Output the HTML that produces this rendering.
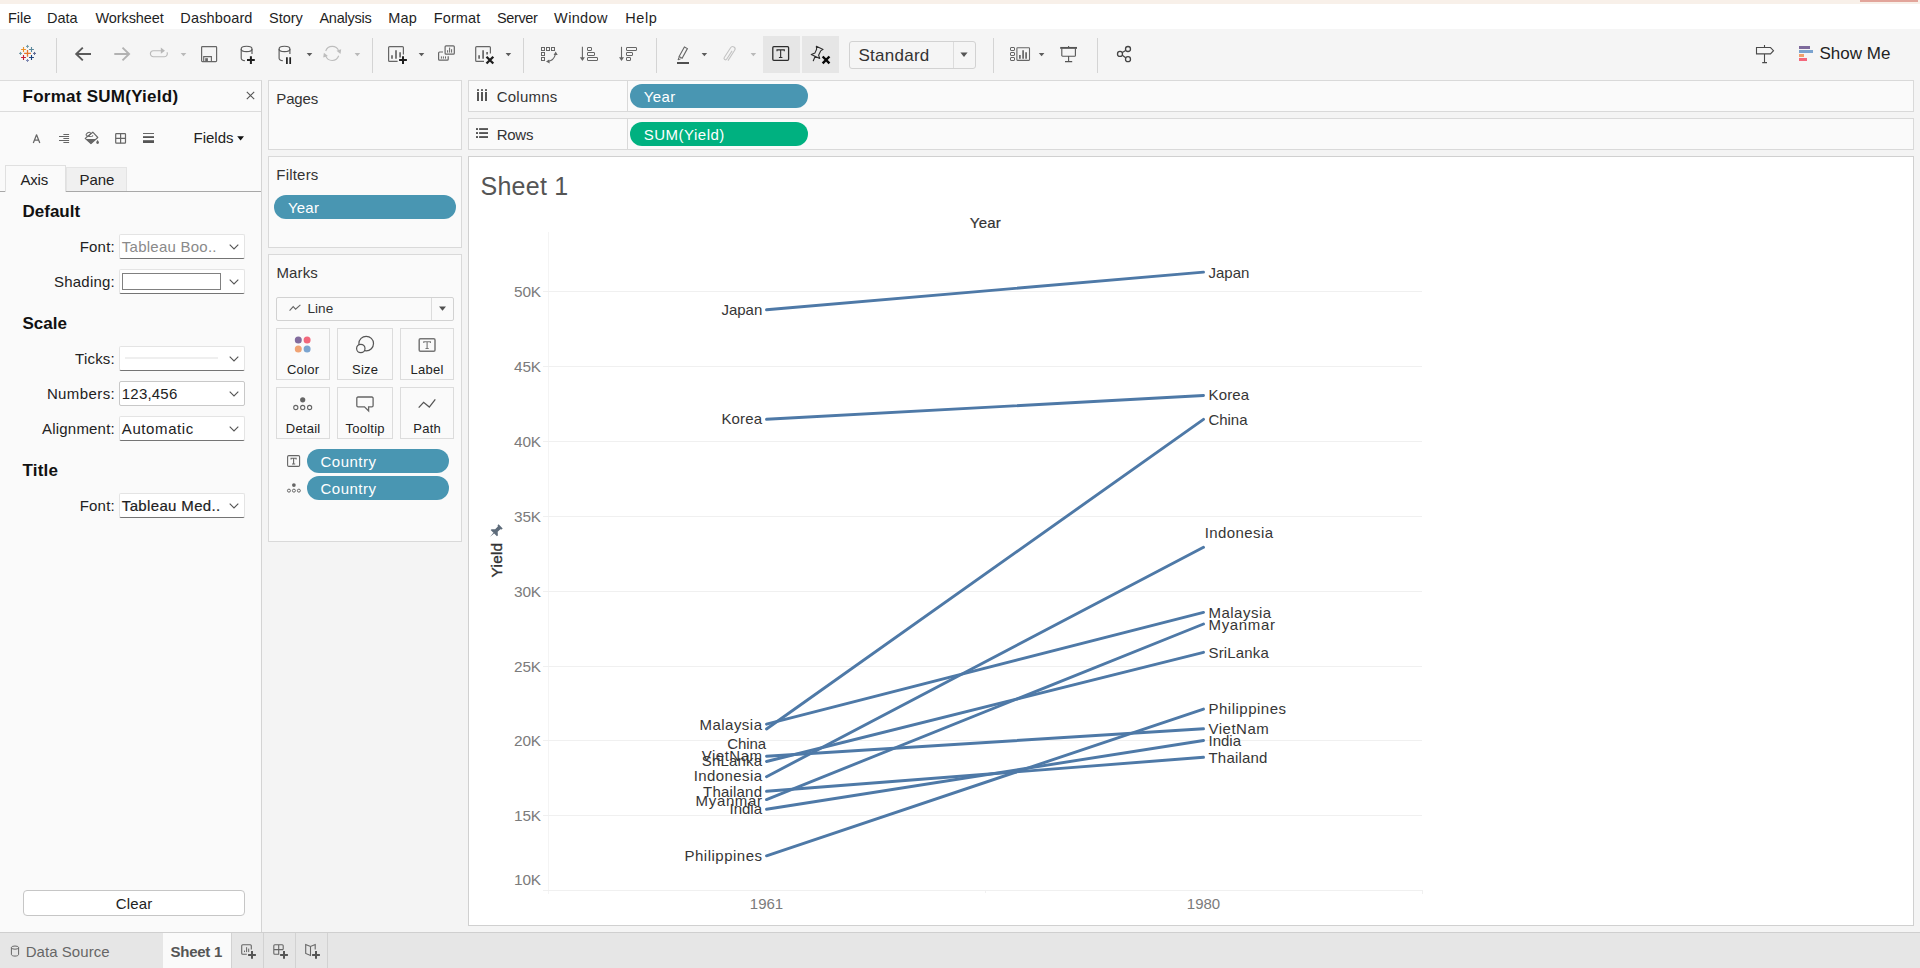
<!DOCTYPE html>
<html lang="en"><head><meta charset="utf-8"><title>Tableau - Sheet 1</title>
<style>
html,body{margin:0;padding:0}
body{width:1920px;height:968px;position:relative;overflow:hidden;background:#f4f4f4;font-family:"Liberation Sans", sans-serif;}
div,span.t,svg{position:absolute;box-sizing:border-box}
span.t{white-space:nowrap;display:block}
.card{background:#fafafa;border:1px solid #d9d9d9}
.dd{background:#fff;border:1px solid #e4e4e4;border-bottom:1px solid #747474;border-radius:2px}
.dd.pl{border:1px solid #c8c8c8}
.pill{border-radius:12px;height:24px}
.mb{background:#fafafa;border:1px solid #dcdcdc}
.sep{width:1px;background:#d4d4d4;top:38px;height:35px}
</style></head><body>
<div style="left:0px;top:0px;width:1920px;height:4px;background:#f8f0e9"></div>
<div style="left:1860px;top:0px;width:58px;height:2px;background:#e2a59b"></div>
<div style="left:0px;top:4px;width:1920px;height:25px;background:#fff"></div>
<div style="left:0px;top:29px;width:1920px;height:51px;background:#f5f5f5"></div>
<span class="t" style="top:10.73px;font-size:14.5px;line-height:14.5px;color:#1f1f1f;left:8px;">File</span>
<span class="t" style="top:10.73px;font-size:14.5px;line-height:14.5px;color:#1f1f1f;left:47px;">Data</span>
<span class="t" style="top:10.73px;font-size:14.5px;line-height:14.5px;color:#1f1f1f;letter-spacing:-0.1px;left:95.5px;">Worksheet</span>
<span class="t" style="top:10.73px;font-size:14.5px;line-height:14.5px;color:#1f1f1f;letter-spacing:0.15px;left:180.3px;">Dashboard</span>
<span class="t" style="top:10.73px;font-size:14.5px;line-height:14.5px;color:#1f1f1f;left:269px;">Story</span>
<span class="t" style="top:10.73px;font-size:14.5px;line-height:14.5px;color:#1f1f1f;letter-spacing:-0.25px;left:319.4px;">Analysis</span>
<span class="t" style="top:10.73px;font-size:14.5px;line-height:14.5px;color:#1f1f1f;letter-spacing:0.15px;left:388.3px;">Map</span>
<span class="t" style="top:10.73px;font-size:14.5px;line-height:14.5px;color:#1f1f1f;letter-spacing:0.1px;left:433.8px;">Format</span>
<span class="t" style="top:10.73px;font-size:14.5px;line-height:14.5px;color:#1f1f1f;letter-spacing:-0.35px;left:496.9px;">Server</span>
<span class="t" style="top:10.73px;font-size:14.5px;line-height:14.5px;color:#1f1f1f;letter-spacing:0.35px;left:554.1px;">Window</span>
<span class="t" style="top:10.73px;font-size:14.5px;line-height:14.5px;color:#1f1f1f;letter-spacing:0.6px;left:625.2px;">Help</span>
<div class="sep" style="left:56px"></div>
<div class="sep" style="left:372px"></div>
<div class="sep" style="left:523px"></div>
<div class="sep" style="left:656px"></div>
<div class="sep" style="left:993px"></div>
<div class="sep" style="left:1097px"></div>
<div style="left:763px;top:36px;width:37px;height:37px;background:#e6e6e6"></div>
<div style="left:802px;top:36px;width:37px;height:37px;background:#e6e6e6"></div>
<svg style="left:0px;top:29px" width="1920" height="51" viewBox="0 29 1920 51" fill="none"><path d="M24.1 53.4h6.8M27.5 50.0v6.8" stroke="#e8762c" stroke-width="1.3"/><path d="M21.1 49.5h4.8M23.5 47.1v4.8" stroke="#eb9129" stroke-width="1.1"/><path d="M29.1 49.5h4.8M31.5 47.1v4.8" stroke="#59879b" stroke-width="1.1"/><path d="M21.1 57.5h4.8M23.5 55.1v4.8" stroke="#c72035" stroke-width="1.1"/><path d="M29.1 57.5h4.8M31.5 55.1v4.8" stroke="#1f447e" stroke-width="1.1"/><path d="M26.0 46.4h3.0M27.5 44.9v3.0" stroke="#7099a6" stroke-width="1.0"/><path d="M19.0 53.4h3.0M20.5 51.9v3.0" stroke="#7099a6" stroke-width="1.0"/><path d="M33.0 53.4h3.0M34.5 51.9v3.0" stroke="#5b6591" stroke-width="1.0"/><path d="M26.0 60.5h3.0M27.5 59.0v3.0" stroke="#8089b3" stroke-width="1.0"/><path d="M91 54H76M82.8 47.6L76.2 54L82.8 60.4" stroke="#5a5a5a" stroke-width="1.9"/><path d="M114.3 54H129.3M122.5 47.6L129.1 54L122.5 60.4" stroke="#b2b2b2" stroke-width="1.9"/><path d="M161.5 50.7H153.4a3 3 0 0 0 0 6H164.4a3 3 0 0 0 2.6-4.4" stroke="#bababa" stroke-width="1.15"/><path d="M160.8 47.6l4.2 3.1l-4.2 3.1z" fill="#b8b8b8"/><path d="M180.7 53h5.6l-2.8 3.3z" fill="#b9b9b9"/><rect x="201.6" y="46.6" width="15" height="15" rx="0.8" stroke="#666" stroke-width="1.2"/><path d="M203.7 61V56.6H211.4V61" stroke="#666" stroke-width="1.1"/><rect x="205.2" y="58.2" width="2.7" height="3" fill="#666"/><ellipse cx="246.6" cy="48.9" rx="5.4" ry="2.7" stroke="#5a5a5a" stroke-width="1.15"/><path d="M241.2 48.9V58.2c0 1.2 1.5 2.2 3.8 2.6M252.0 48.9V54" stroke="#5a5a5a" stroke-width="1.15"/><path d="M247.0 60.1h7.8M250.9 56.2v7.8" stroke="#1f1f1f" stroke-width="2"/><ellipse cx="284.5" cy="48.9" rx="5.4" ry="2.7" stroke="#5a5a5a" stroke-width="1.15"/><path d="M279.1 48.9V58.2c0 1.2 1.5 2.2 3.8 2.6M289.90000000000003 48.9V54" stroke="#5a5a5a" stroke-width="1.15"/><path d="M286.9 57.2v6.7M290.2 57.2v6.7" stroke="#1f1f1f" stroke-width="1.7"/><path d="M306.7 53h5.6l-2.8 3.3z" fill="#5c5c5c"/><path d="M325.7 51.0A6.9 6.9 0 0 1 338.7 50.9M338.7 55.8A6.9 6.9 0 0 1 325.7 55.9" stroke="#bdbdbd" stroke-width="1.1"/><path d="M336.5 50.8L341.2 49.3L340.5 54z" fill="#bdbdbd"/><path d="M327.9 56.0L323.2 57.5L323.9 52.8z" fill="#bdbdbd"/><path d="M354.59999999999997 53h5.6l-2.8 3.3z" fill="#b9b9b9"/><path d="M403.4 54.6V47.6a1 1 0 0 0 -1-1H389.6a1 1 0 0 0 -1 1V60.4a1 1 0 0 0 1 1H397.6" stroke="#666" stroke-width="1.2"/><path d="M392 55.3v3.4M396 50.2v8.5M400.1 52.2v5.4" stroke="#666" stroke-width="1.7"/><path d="M399.1 60.1h7.8M403 56.2v7.8" stroke="#1f1f1f" stroke-width="2"/><path d="M418.7 53h5.6l-2.8 3.3z" fill="#5c5c5c"/><path d="M443 52H439.6a1 1 0 0 0 -1 1V59.2a1 1 0 0 0 1 1H447.2a1 1 0 0 0 1-1V56.2" stroke="#666" stroke-width="1.2"/><rect x="445.1" y="45.8" width="9.2" height="8.4" rx="1" stroke="#666" stroke-width="1.2"/><path d="M447.6 50.2v2.4M449.6 47.6v5M451.6 49.2v3.4M441.4 56.4v2.2M443.4 56.4v2.2M445.5 56.4v2.2" stroke="#666" stroke-width="1"/><path d="M490.4 53.6V47.6a1 1 0 0 0 -1-1H476.7a1 1 0 0 0 -1 1V60.4a1 1 0 0 0 1 1H484" stroke="#666" stroke-width="1.2"/><path d="M479.1 55.3v3.4M483.1 50.2v8.5M487.1 52v2.6" stroke="#666" stroke-width="1.7"/><path d="M486.5 56.7l6.8 6.8M493.29999999999995 56.7l-6.8 6.8" stroke="#1f1f1f" stroke-width="2.3"/><path d="M505.59999999999997 53h5.6l-2.8 3.3z" fill="#5c5c5c"/><rect x="541.5" y="47.5" width="3" height="3" stroke="#666" stroke-width="1" shape-rendering="crispEdges"/><rect x="546.5" y="47.5" width="3" height="3" stroke="#666" stroke-width="1" shape-rendering="crispEdges"/><rect x="551.5" y="47.5" width="3" height="3" stroke="#666" stroke-width="1" shape-rendering="crispEdges"/><rect x="541.5" y="52.5" width="3" height="3" stroke="#666" stroke-width="1" shape-rendering="crispEdges"/><rect x="541.5" y="57.5" width="3" height="3" stroke="#666" stroke-width="1" shape-rendering="crispEdges"/><path d="M548.4 61.2c3.6-0.6 6-3 6.9-6.6" stroke="#666" stroke-width="1.1"/><path d="M555.7 51.6l2 3.5h-4.1z M546 61.6l3.2-2.2l0.5 4z" fill="#666"/><path d="M582.4 46.8V58" stroke="#666" stroke-width="1.1"/><path d="M579.9 57.2h5l-2.5 3.9z" fill="#666"/><rect x="587.5" y="47.5" width="4" height="3" rx="0.3" stroke="#666" stroke-width="1"/><rect x="587.5" y="52.5" width="7" height="3" rx="0.3" stroke="#666" stroke-width="1"/><rect x="587.5" y="57.5" width="10" height="3" rx="0.3" stroke="#666" stroke-width="1"/><path d="M621.5 46.8V58" stroke="#666" stroke-width="1.1"/><path d="M619.0 57.2h5l-2.5 3.9z" fill="#666"/><rect x="626.5" y="47.5" width="10" height="3" rx="0.3" stroke="#666" stroke-width="1"/><rect x="626.5" y="52.5" width="6" height="3" rx="0.3" stroke="#666" stroke-width="1"/><rect x="626.5" y="57.5" width="4" height="3" rx="0.3" stroke="#666" stroke-width="1"/><path d="M684.4 46.9l3 1.7l-5.3 9.6l-3-1.7z" stroke="#666" stroke-width="1.1"/><path d="M679.2 57l-1.2 2.8l2.6-0.9" stroke="#666" stroke-width="1"/><path d="M677 63H689" stroke="#4f4f4f" stroke-width="2"/><path d="M701.6 53h5.6l-2.8 3.3z" fill="#5c5c5c"/><path transform="translate(728.9 53.9) rotate(33) scale(0.93)" d="M1.1 -4.6V5.9A1.6 1.6 0 0 1 -2.1 5.9V-6.6A2.6 2.6 0 0 1 3.1 -6.6V6.6" stroke="#c3c3c3" stroke-width="1.15"/><path d="M750.6 53h5.6l-2.8 3.3z" fill="#b9b9b9"/><rect x="772.8" y="46.7" width="15.8" height="13.6" rx="1" stroke="#2d2d2d" stroke-width="1.3"/><path d="M777 51.2V49.9h7.3v1.3M780.65 49.9v7.4M778.9 57.5h3.5" stroke="#2d2d2d" stroke-width="1.1"/><path d="M816.35 46.3L823.1 49.4L820.65 50.9L818.6 55.2L819.7 58.5L811.25 54.5L815 52.9L816.6 49.3zM815.1 56.5L813.3 60.8" stroke="#2c2c2c" stroke-width="1.1" stroke-linejoin="round" stroke-linecap="round"/><path d="M822.65 56.5l6.8 6.8M829.4499999999999 56.5l-6.8 6.8" stroke="#080808" stroke-width="2.4"/><rect x="1010.5" y="47.5" width="4" height="3" rx="0.5" stroke="#666" stroke-width="1"/><rect x="1010.5" y="52.5" width="4" height="3" rx="0.5" stroke="#666" stroke-width="1"/><rect x="1010.5" y="57.5" width="4" height="3" rx="0.5" stroke="#666" stroke-width="1"/><rect x="1016.9" y="47.8" width="12.6" height="12.6" rx="0.6" stroke="#666" stroke-width="1.1"/><path d="M1019.9 55.1v3.7M1023.1 50.2v8.6M1026.1 52.2v6.6" stroke="#666" stroke-width="1.7"/><path d="M1038.8 53h5.6l-2.8 3.3z" fill="#5c5c5c"/><path d="M1060.2 47.9H1077" stroke="#555" stroke-width="1.9"/><path d="M1068.6 46v1.4M1061.8 48.6V55.4a0.8 0.8 0 0 0 0.8 0.8H1074.6a0.8 0.8 0 0 0 0.8-0.8V48.6M1068.6 56.4V61.4M1065 61.6h7.2" stroke="#555" stroke-width="1.1"/><path d="M1122.3 52.6l3.4-2.2M1122.3 55.3l3.4 2.4" stroke="#444" stroke-width="1.2"/><circle cx="1128" cy="49" r="2.5" stroke="#444" stroke-width="1.3"/><circle cx="1120" cy="53.9" r="2.5" stroke="#444" stroke-width="1.3"/><circle cx="1128" cy="59.2" r="2.5" stroke="#444" stroke-width="1.3"/><path d="M1764.5 45V47.4M1764.5 54V62.4M1762.2 62.6h4.8M1756.5 47.5H1770.5l3 3.2l-3 3.2H1756.5z" stroke="#4a4a4a" stroke-width="1.1"/></svg>
<div style="left:849px;top:41px;width:127px;height:28px;border:1px solid #d2d2d2;border-radius:3px;background:#f5f5f5"></div>
<div style="left:953px;top:42px;width:1px;height:26px;background:#dcdcdc"></div>
<span class="t" style="top:46.61px;font-size:17px;line-height:17px;color:#333;letter-spacing:0.25px;left:858.5px;">Standard</span>
<svg style="left:959px;top:52px;" width="10" height="6" viewBox="0 0 10 6" fill="none"><path d="M1.4 0.6h7.2l-3.6 4.4z" fill="#555"/></svg>
<div style="left:1799px;top:46px;width:11px;height:3px;background:#7e6a9c"></div>
<div style="left:1799px;top:50px;width:14px;height:3px;background:#7aa3cf"></div>
<div style="left:1799px;top:54px;width:5px;height:3px;background:#f0a06c"></div>
<div style="left:1799px;top:58px;width:8px;height:3px;background:#f4687c"></div>
<span class="t" style="top:45.41px;font-size:17px;line-height:17px;color:#222;left:1819.5px;">Show Me</span>
<div style="left:0px;top:80px;width:262px;height:853px;background:#fafafa;border-right:1px solid #d4d4d4;border-top:1px solid #dcdcdc"></div>
<div style="left:0px;top:111px;width:261px;height:1px;background:#dcdcdc"></div>
<span class="t" style="top:87.61px;font-size:17px;line-height:17px;color:#111;font-weight:bold;letter-spacing:0.26px;left:22.5px;">Format SUM(Yield)</span>
<svg style="left:246px;top:91px;" width="9" height="9" viewBox="0 0 9 9" fill="none"><path d="M0.8 0.8l7.4 7.4M8.2 0.8l-7.4 7.4" stroke="#555" stroke-width="1.1"/></svg>
<span class="t" style="top:130.30px;font-size:15px;line-height:15px;color:#222;left:193.5px;">Fields</span>
<svg style="left:237px;top:136px;" width="8" height="5" viewBox="0 0 8 5" fill="none"><path d="M0.2 0.2h6.8l-3.4 4.2z" fill="#111"/></svg>
<svg style="left:24px;top:128px" width="140" height="20" viewBox="24 128 140 20" fill="none"><path d="M33.3 143l3.25-8.2l3.25 8.2M34.4 140.2h4.4" stroke="#666" stroke-width="1.25" stroke-linejoin="round"/><path d="M63.4 134.5H69.1" stroke="#666" stroke-width="1"/><path d="M59 136.5H69.1" stroke="#666" stroke-width="1"/><path d="M63.4 138.5H69.1" stroke="#666" stroke-width="1"/><path d="M59 140.5H69.1" stroke="#666" stroke-width="1"/><path d="M63.4 142.5H69.1" stroke="#666" stroke-width="1"/><path d="M85.2 138.4L92.8 132.2L97.8 137.5L90.95 143.6z" stroke="#666" stroke-width="1.1" stroke-linejoin="round"/><path d="M85.6 139.1H96.2L90.95 143.8z" fill="#666"/><ellipse cx="88.3" cy="134.2" rx="2.5" ry="1.5" transform="rotate(-38 88.3 134.2)" stroke="#666" stroke-width="1"/><path d="M87.7 136c1.5 0.7 3.4 0.7 5 0.2v-0.9" stroke="#666" stroke-width="1"/><path d="M97.6 140.1c0.8 1.1 1.4 1.8 1.4 2.5a1.4 1.4 0 0 1 -2.8 0c0-0.7 0.6-1.4 1.4-2.5z" fill="#666"/><rect x="115.7" y="133.6" width="9.8" height="9.6" rx="0.6" stroke="#666" stroke-width="1.2"/><path d="M120.6 133.6v9.6M115.7 138.4h9.8" stroke="#666" stroke-width="1.2"/><rect x="143" y="133" width="11" height="1" fill="#666"/><rect x="143" y="136.2" width="11" height="1.8" fill="#555"/><rect x="143" y="140.2" width="11" height="2.8" fill="#555"/></svg>
<div style="left:0px;top:191px;width:261px;height:1px;background:#a8a8a8"></div>
<div style="left:66px;top:167px;width:61px;height:24px;background:#f0f0f0;border:1px solid #e4e4e4;border-bottom:none"></div>
<div style="left:5px;top:165px;width:61px;height:27px;background:#fafafa;border:1px solid #e0e0e0;border-bottom:none"></div>
<span class="t" style="top:171.50px;font-size:15px;line-height:15px;color:#222;letter-spacing:-0.2px;left:20.5px;">Axis</span>
<span class="t" style="top:171.50px;font-size:15px;line-height:15px;color:#222;letter-spacing:-0.1px;left:79.5px;">Pane</span>
<span class="t" style="top:203.31px;font-size:17px;line-height:17px;color:#111;font-weight:bold;left:22.5px;">Default</span>
<span class="t" style="top:315.21px;font-size:17px;line-height:17px;color:#111;font-weight:bold;left:22.5px;">Scale</span>
<span class="t" style="top:462.21px;font-size:17px;line-height:17px;color:#111;font-weight:bold;letter-spacing:0.2px;left:22.5px;">Title</span>
<span class="t" style="top:239.30px;font-size:15px;line-height:15px;color:#222;letter-spacing:0.2px;right:1805.1px;">Font:</span>
<div class="dd" style="left:119px;top:234.0px;width:126px;height:25px"></div>
<svg style="left:228.5px;top:243.5px;" width="10" height="6" viewBox="0 0 10 6" fill="none"><path d="M0.7 0.7l4.3 4.3l4.3-4.3" stroke="#555" stroke-width="1.1"/></svg>
<span class="t" style="top:239.30px;font-size:15px;line-height:15px;color:#8a8a8a;letter-spacing:0.25px;left:121.8px;">Tableau Boo..</span>
<span class="t" style="top:274.30px;font-size:15px;line-height:15px;color:#222;letter-spacing:0.2px;right:1805.1px;">Shading:</span>
<div class="dd" style="left:119px;top:269.0px;width:126px;height:25px"></div>
<svg style="left:228.5px;top:278.5px;" width="10" height="6" viewBox="0 0 10 6" fill="none"><path d="M0.7 0.7l4.3 4.3l4.3-4.3" stroke="#555" stroke-width="1.1"/></svg>
<div style="left:122px;top:273.0px;width:99px;height:17px;background:#fff;border:1px solid #808080"></div>
<span class="t" style="top:351.30px;font-size:15px;line-height:15px;color:#222;letter-spacing:0.2px;right:1805.1px;">Ticks:</span>
<div class="dd" style="left:119px;top:346.0px;width:126px;height:25px"></div>
<svg style="left:228.5px;top:355.5px;" width="10" height="6" viewBox="0 0 10 6" fill="none"><path d="M0.7 0.7l4.3 4.3l4.3-4.3" stroke="#555" stroke-width="1.1"/></svg>
<div style="left:125px;top:357.0px;width:93px;height:2px;background:#efefef"></div>
<span class="t" style="top:386.30px;font-size:15px;line-height:15px;color:#222;letter-spacing:0.4px;right:1804.8999999999999px;">Numbers:</span>
<div class="dd pl" style="left:119px;top:381.0px;width:126px;height:25px"></div>
<svg style="left:228.5px;top:390.5px;" width="10" height="6" viewBox="0 0 10 6" fill="none"><path d="M0.7 0.7l4.3 4.3l4.3-4.3" stroke="#555" stroke-width="1.1"/></svg>
<span class="t" style="top:386.30px;font-size:15px;line-height:15px;color:#222;letter-spacing:0.2px;left:121.8px;">123,456</span>
<span class="t" style="top:421.30px;font-size:15px;line-height:15px;color:#222;letter-spacing:0.2px;right:1805.1px;">Alignment:</span>
<div class="dd" style="left:119px;top:416.0px;width:126px;height:25px"></div>
<svg style="left:228.5px;top:425.5px;" width="10" height="6" viewBox="0 0 10 6" fill="none"><path d="M0.7 0.7l4.3 4.3l4.3-4.3" stroke="#555" stroke-width="1.1"/></svg>
<span class="t" style="top:421.30px;font-size:15px;line-height:15px;color:#222;letter-spacing:0.6px;left:121.8px;">Automatic</span>
<span class="t" style="top:498.30px;font-size:15px;line-height:15px;color:#222;letter-spacing:0.2px;right:1805.1px;">Font:</span>
<div class="dd" style="left:119px;top:493.0px;width:126px;height:25px"></div>
<svg style="left:228.5px;top:502.5px;" width="10" height="6" viewBox="0 0 10 6" fill="none"><path d="M0.7 0.7l4.3 4.3l4.3-4.3" stroke="#555" stroke-width="1.1"/></svg>
<span class="t" style="top:498.30px;font-size:15px;line-height:15px;color:#222;letter-spacing:0.35px;left:121.8px;"><span style="-webkit-text-stroke:0.2px #222">Tableau Med..</span></span>
<div style="left:23px;top:890px;width:222px;height:26px;background:#fff;border:1px solid #c6c6c6;border-radius:4px"></div>
<span class="t" style="top:896.40px;font-size:15px;line-height:15px;color:#222;letter-spacing:0.2px;left:134.1px;transform:translateX(-50%);">Clear</span>
<div class="card" style="left:268px;top:80px;width:194px;height:70px"></div>
<span class="t" style="top:91.30px;font-size:15px;line-height:15px;color:#333;letter-spacing:-0.15px;left:276.3px;">Pages</span>
<div class="card" style="left:268px;top:156px;width:194px;height:92px"></div>
<span class="t" style="top:167.30px;font-size:15px;line-height:15px;color:#333;letter-spacing:0.2px;left:276.3px;">Filters</span>
<div class="pill" style="left:274px;top:195px;width:182px;background:#4996b2"></div>
<span class="t" style="top:199.80px;font-size:15px;line-height:15px;color:#fff;letter-spacing:0.2px;left:288px;">Year</span>
<div class="card" style="left:268px;top:254px;width:194px;height:288px"></div>
<span class="t" style="top:265.30px;font-size:15px;line-height:15px;color:#333;letter-spacing:0.1px;left:276.5px;">Marks</span>
<div style="left:276px;top:297px;width:178px;height:24px;border:1px solid #d2d2d2;border-radius:2px;background:#fafafa"></div>
<div style="left:431px;top:298px;width:1px;height:22px;background:#dcdcdc"></div>
<svg style="left:289px;top:304px;" width="12" height="8" viewBox="0 0 12 8" fill="none"><path d="M0.6 6.6l3.6-4l2.4 2.6l4.8-4.4" stroke="#666" stroke-width="1.1"/></svg>
<span class="t" style="top:302.19px;font-size:13.6px;line-height:13.6px;color:#333;left:307.5px;">Line</span>
<svg style="left:438px;top:306.2px;" width="9" height="6" viewBox="0 0 9 6" fill="none"><path d="M1 0.5h7l-3.5 4.2z" fill="#505050"/></svg>
<div class="mb" style="left:276px;top:328px;width:54px;height:52px"></div>
<span class="t" style="top:362.60px;font-size:13px;line-height:13px;color:#222;letter-spacing:0.25px;left:303.125px;transform:translateX(-50%);">Color</span>
<div class="mb" style="left:337px;top:328px;width:56px;height:52px"></div>
<span class="t" style="top:362.60px;font-size:13px;line-height:13px;color:#222;letter-spacing:0.25px;left:365.125px;transform:translateX(-50%);">Size</span>
<div class="mb" style="left:400px;top:328px;width:54px;height:52px"></div>
<span class="t" style="top:362.60px;font-size:13px;line-height:13px;color:#222;letter-spacing:0.25px;left:427.125px;transform:translateX(-50%);">Label</span>
<div class="mb" style="left:276px;top:387px;width:54px;height:52px"></div>
<span class="t" style="top:421.60px;font-size:13px;line-height:13px;color:#222;letter-spacing:0.25px;left:303.125px;transform:translateX(-50%);">Detail</span>
<div class="mb" style="left:337px;top:387px;width:56px;height:52px"></div>
<span class="t" style="top:421.60px;font-size:13px;line-height:13px;color:#222;letter-spacing:0.25px;left:365.125px;transform:translateX(-50%);">Tooltip</span>
<div class="mb" style="left:400px;top:387px;width:54px;height:52px"></div>
<span class="t" style="top:421.60px;font-size:13px;line-height:13px;color:#222;letter-spacing:0.25px;left:427.125px;transform:translateX(-50%);">Path</span>
<svg style="left:276px;top:330px" width="180" height="170" viewBox="276 330 180 170" fill="none"><circle cx="298.3" cy="340.1" r="3.5" fill="#826b9d"/><circle cx="307.1" cy="340.1" r="3.5" fill="#f2687c"/><circle cx="298.3" cy="349" r="3.5" fill="#f0a374"/><circle cx="307.1" cy="349" r="3.5" fill="#7ca5d0"/><circle cx="366.2" cy="343.6" r="7.3" stroke="#555" stroke-width="1.2"/><circle cx="360.8" cy="348.5" r="4.2" stroke="#555" stroke-width="1.2" fill="#fafafa"/><rect x="419.2" y="338.7" width="15.8" height="12.6" rx="1.2" stroke="#777" stroke-width="1.5"/><path d="M423.782 343.024V341.724h6.636v1.3M427.09999999999997 341.724V348.52799999999996M425.49999999999994 348.52799999999996h3.2" stroke="#777" stroke-width="1.1"/><circle cx="302.7" cy="399.8" r="2.6" fill="#666"/><circle cx="295.8" cy="407.5" r="2.1" stroke="#666" stroke-width="1.1"/><circle cx="302.7" cy="407.5" r="2.1" stroke="#666" stroke-width="1.1"/><circle cx="309.59999999999997" cy="407.5" r="2.1" stroke="#666" stroke-width="1.1"/><path d="M358 397h13.9a1.2 1.2 0 0 1 1.2 1.2V405.6a1.2 1.2 0 0 1 -1.2 1.2H368.6V411l-4.1-4.2H358a1.2 1.2 0 0 1 -1.2-1.2V398.2a1.2 1.2 0 0 1 1.2-1.2z" stroke="#666" stroke-width="1.3"/><path d="M418.7 407.6l4.9-5.3l5.7 4.8l6-7.8" stroke="#555" stroke-width="1.3"/><rect x="287.6" y="455.6" width="12" height="10.8" rx="1.2" stroke="#666" stroke-width="1.1"/><path d="M291.08000000000004 459.492V458.192h5.04v1.3M293.6 458.192V464.024M292.0 464.024h3.2" stroke="#666" stroke-width="1.1"/><circle cx="293.9" cy="485.1" r="1.8719999999999999" fill="#666"/><circle cx="288.93199999999996" cy="490.644" r="1.512" stroke="#666" stroke-width="1"/><circle cx="293.9" cy="490.644" r="1.512" stroke="#666" stroke-width="1"/><circle cx="298.868" cy="490.644" r="1.512" stroke="#666" stroke-width="1"/></svg>
<div class="pill" style="left:307px;top:449px;width:142px;background:#4996b2"></div>
<div class="pill" style="left:307px;top:476px;width:142px;background:#4996b2"></div>
<span class="t" style="top:453.70px;font-size:15px;line-height:15px;color:#fff;letter-spacing:0.5px;left:320.5px;">Country</span>
<span class="t" style="top:480.70px;font-size:15px;line-height:15px;color:#fff;letter-spacing:0.5px;left:320.5px;">Country</span>
<div class="card" style="left:468px;top:80px;width:1446px;height:32px"></div>
<div class="card" style="left:468px;top:118px;width:1446px;height:32px"></div>
<div style="left:627px;top:81px;width:1px;height:30px;background:#d9d9d9"></div>
<div style="left:627px;top:119px;width:1px;height:30px;background:#d9d9d9"></div>
<span class="t" style="top:88.90px;font-size:15px;line-height:15px;color:#333;letter-spacing:0.25px;left:496.7px;">Columns</span>
<span class="t" style="top:126.90px;font-size:15px;line-height:15px;color:#333;letter-spacing:-0.25px;left:496.7px;">Rows</span>
<div class="pill" style="left:630px;top:84px;width:178px;background:#4996b2"></div>
<div class="pill" style="left:630px;top:122px;width:178px;background:#00b180"></div>
<span class="t" style="top:88.90px;font-size:15px;line-height:15px;color:#fff;letter-spacing:0.4px;left:643.7px;">Year</span>
<span class="t" style="top:126.90px;font-size:15px;line-height:15px;color:#fff;letter-spacing:0.5px;left:643.7px;">SUM(Yield)</span>
<svg style="left:474px;top:86px" width="16" height="56" viewBox="474 86 16 56" fill="none"><rect x="477" y="89.2" width="2" height="1.7" fill="#555"/><rect x="477" y="92" width="2" height="9" fill="#555"/><rect x="481" y="89.2" width="2" height="1.7" fill="#555"/><rect x="481" y="92" width="2" height="9" fill="#555"/><rect x="485" y="89.2" width="2" height="1.7" fill="#555"/><rect x="485" y="92" width="2" height="9" fill="#555"/><rect x="476" y="128.1" width="2" height="1.9" fill="#555"/><rect x="479.1" y="128.1" width="8.9" height="1.9" fill="#555"/><rect x="476" y="132.1" width="2" height="1.9" fill="#555"/><rect x="479.1" y="132.1" width="8.9" height="1.9" fill="#555"/><rect x="476" y="136.1" width="2" height="1.9" fill="#555"/><rect x="479.1" y="136.1" width="8.9" height="1.9" fill="#555"/></svg>
<div style="left:468px;top:156px;width:1446px;height:770px;background:#fff;border:1px solid #d0d0d0"></div>
<span class="t" style="top:173.94px;font-size:25px;line-height:25px;color:#555;letter-spacing:0.25px;left:480.5px;">Sheet 1</span>
<svg style="left:0;top:0" width="1920" height="968" viewBox="0 0 1920 968" fill="none"><path d="M548.5 232V894" stroke="#f4f4f4" stroke-width="1"/><path d="M543 291.5H1422" stroke="#f0f0f0" stroke-width="1"/><path d="M543 366.5H1422" stroke="#f0f0f0" stroke-width="1"/><path d="M543 441.5H1422" stroke="#f0f0f0" stroke-width="1"/><path d="M543 516.5H1422" stroke="#f0f0f0" stroke-width="1"/><path d="M543 591.5H1422" stroke="#f0f0f0" stroke-width="1"/><path d="M543 666.5H1422" stroke="#f0f0f0" stroke-width="1"/><path d="M543 740.5H1422" stroke="#f0f0f0" stroke-width="1"/><path d="M543 815.5H1422" stroke="#f0f0f0" stroke-width="1"/><path d="M543 890.5H1423M1422.5 890V894M985.5 890V893" stroke="#f0f0f0" stroke-width="1"/><path d="M766.5 309.8L1203.5 272.1" stroke="#4e79a7" stroke-width="2.9" stroke-linecap="round"/><path d="M766.5 419.3L1203.5 395.5" stroke="#4e79a7" stroke-width="2.9" stroke-linecap="round"/><path d="M766.5 729.0L1203.5 419.4" stroke="#4e79a7" stroke-width="2.9" stroke-linecap="round"/><path d="M766.5 776.7L1203.5 547.3" stroke="#4e79a7" stroke-width="2.9" stroke-linecap="round"/><path d="M766.5 724.2L1203.5 612.4" stroke="#4e79a7" stroke-width="2.9" stroke-linecap="round"/><path d="M766.5 799.6L1203.5 624.0" stroke="#4e79a7" stroke-width="2.9" stroke-linecap="round"/><path d="M766.5 761.5L1203.5 652.3" stroke="#4e79a7" stroke-width="2.9" stroke-linecap="round"/><path d="M766.5 855.8L1203.5 709.1" stroke="#4e79a7" stroke-width="2.9" stroke-linecap="round"/><path d="M766.5 756.2L1203.5 728.8" stroke="#4e79a7" stroke-width="2.9" stroke-linecap="round"/><path d="M766.5 809.2L1203.5 740.5" stroke="#4e79a7" stroke-width="2.9" stroke-linecap="round"/><path d="M766.5 791.3L1203.5 757.3" stroke="#4e79a7" stroke-width="2.9" stroke-linecap="round"/></svg>
<span class="t" style="top:283.96px;font-size:15.4px;line-height:15.4px;color:#7b7b7b;letter-spacing:-0.2px;right:1379.2px;">50K</span>
<span class="t" style="top:358.96px;font-size:15.4px;line-height:15.4px;color:#7b7b7b;letter-spacing:-0.2px;right:1379.2px;">45K</span>
<span class="t" style="top:433.96px;font-size:15.4px;line-height:15.4px;color:#7b7b7b;letter-spacing:-0.2px;right:1379.2px;">40K</span>
<span class="t" style="top:508.96px;font-size:15.4px;line-height:15.4px;color:#7b7b7b;letter-spacing:-0.2px;right:1379.2px;">35K</span>
<span class="t" style="top:583.96px;font-size:15.4px;line-height:15.4px;color:#7b7b7b;letter-spacing:-0.2px;right:1379.2px;">30K</span>
<span class="t" style="top:658.96px;font-size:15.4px;line-height:15.4px;color:#7b7b7b;letter-spacing:-0.2px;right:1379.2px;">25K</span>
<span class="t" style="top:732.96px;font-size:15.4px;line-height:15.4px;color:#7b7b7b;letter-spacing:-0.2px;right:1379.2px;">20K</span>
<span class="t" style="top:807.96px;font-size:15.4px;line-height:15.4px;color:#7b7b7b;letter-spacing:-0.2px;right:1379.2px;">15K</span>
<span class="t" style="top:871.96px;font-size:15.4px;line-height:15.4px;color:#7b7b7b;letter-spacing:-0.2px;right:1379.2px;">10K</span>
<span class="t" style="top:896.30px;font-size:15px;line-height:15px;color:#7b7b7b;left:766.5px;transform:translateX(-50%);">1961</span>
<span class="t" style="top:896.30px;font-size:15px;line-height:15px;color:#7b7b7b;left:1203.5px;transform:translateX(-50%);">1980</span>
<span class="t" style="top:214.80px;font-size:15px;line-height:15px;color:#333;letter-spacing:0.2px;left:985.4px;transform:translateX(-50%);-webkit-text-stroke:0.2px #333;">Year</span>
<span class="t" style="left:497px;top:560px;font-size:15.5px;line-height:16px;color:#333;-webkit-text-stroke:0.35px #333;letter-spacing:0.2px;transform:translate(-50%,-50%) rotate(-90deg);">Yield</span>
<svg style="left:489px;top:524px;" width="14" height="14" viewBox="0 0 14 14" fill="none"><g transform="translate(-0.6 0.6) rotate(45 7 7) translate(7 7) scale(1.2) translate(-7 -7)" fill="#5d6b7a"><path d="M4.6 0.8h4.8v1.2l-0.9 0.6v3.2l2.2 2v1.1h-7.4v-1.1l2.2-2v-3.2l-0.9-0.6z"/><path d="M6.6 8.9h0.8l-0.4 4.6z"/></g></svg>
<span class="t" style="top:302.00px;font-size:15px;line-height:15px;color:#363636;right:1157.7px;">Japan</span>
<span class="t" style="top:411.10px;font-size:15px;line-height:15px;color:#363636;letter-spacing:0.15px;right:1157.85px;">Korea</span>
<span class="t" style="top:716.80px;font-size:15px;line-height:15px;color:#363636;letter-spacing:0.48px;right:1157.52px;">Malaysia</span>
<span class="t" style="top:735.60px;font-size:15px;line-height:15px;color:#363636;letter-spacing:-0.05px;right:1153.85px;">China</span>
<span class="t" style="top:747.90px;font-size:15px;line-height:15px;color:#363636;letter-spacing:0.5px;right:1157.5px;">VietNam</span>
<span class="t" style="top:753.30px;font-size:15px;line-height:15px;color:#363636;letter-spacing:0.15px;right:1157.85px;">SriLanka</span>
<span class="t" style="top:768.10px;font-size:15px;line-height:15px;color:#363636;letter-spacing:0.4px;right:1157.6px;">Indonesia</span>
<span class="t" style="top:783.60px;font-size:15px;line-height:15px;color:#363636;letter-spacing:0.2px;right:1157.8px;">Thailand</span>
<span class="t" style="top:792.50px;font-size:15px;line-height:15px;color:#363636;letter-spacing:0.65px;right:1157.35px;">Myanmar</span>
<span class="t" style="top:800.60px;font-size:15px;line-height:15px;color:#363636;right:1158.0px;">India</span>
<span class="t" style="top:848.00px;font-size:15px;line-height:15px;color:#363636;letter-spacing:0.5px;right:1157.5px;">Philippines</span>
<span class="t" style="top:265.20px;font-size:15px;line-height:15px;color:#363636;left:1208.5px;">Japan</span>
<span class="t" style="top:387.10px;font-size:15px;line-height:15px;color:#363636;letter-spacing:0.15px;left:1208.5px;">Korea</span>
<span class="t" style="top:412.30px;font-size:15px;line-height:15px;color:#363636;letter-spacing:-0.05px;left:1208.5px;">China</span>
<span class="t" style="top:525.00px;font-size:15px;line-height:15px;color:#363636;letter-spacing:0.4px;left:1204.8px;">Indonesia</span>
<span class="t" style="top:604.50px;font-size:15px;line-height:15px;color:#363636;letter-spacing:0.48px;left:1208.5px;">Malaysia</span>
<span class="t" style="top:616.90px;font-size:15px;line-height:15px;color:#363636;letter-spacing:0.65px;left:1208.5px;">Myanmar</span>
<span class="t" style="top:644.80px;font-size:15px;line-height:15px;color:#363636;letter-spacing:0.15px;left:1208.5px;">SriLanka</span>
<span class="t" style="top:700.60px;font-size:15px;line-height:15px;color:#363636;letter-spacing:0.5px;left:1208.5px;">Philippines</span>
<span class="t" style="top:720.60px;font-size:15px;line-height:15px;color:#363636;letter-spacing:0.5px;left:1208.5px;">VietNam</span>
<span class="t" style="top:733.00px;font-size:15px;line-height:15px;color:#363636;left:1208.5px;">India</span>
<span class="t" style="top:749.70px;font-size:15px;line-height:15px;color:#363636;letter-spacing:0.2px;left:1208.5px;">Thailand</span>
<div style="left:0px;top:932px;width:1920px;height:36px;background:#e6e6e6;border-top:1px solid #cfcfcf"></div>
<div style="left:163px;top:933px;width:68px;height:35px;background:#fafafa"></div>
<div style="left:231px;top:933px;width:1px;height:35px;background:#d2d2d2"></div>
<div style="left:263px;top:933px;width:1px;height:35px;background:#d2d2d2"></div>
<div style="left:295px;top:933px;width:1px;height:35px;background:#d2d2d2"></div>
<div style="left:327px;top:933px;width:1px;height:35px;background:#d2d2d2"></div>
<span class="t" style="top:943.60px;font-size:15px;line-height:15px;color:#666;letter-spacing:0.05px;left:25.7px;">Data Source</span>
<span class="t" style="top:943.60px;font-size:15px;line-height:15px;color:#555;font-weight:bold;letter-spacing:-0.25px;left:170.5px;">Sheet 1</span>
<svg style="left:8px;top:940px" width="320" height="24" viewBox="8 940 320 24" fill="none"><ellipse cx="15" cy="947.6" rx="3.6" ry="1.6" stroke="#666" stroke-width="1"/><path d="M11.4 947.6V954.4c0 1 1.6 1.7 3.6 1.7s3.6-0.7 3.6-1.7V947.6" stroke="#666" stroke-width="1"/><path d="M251.3 949.6V945.8a1 1 0 0 0 -1-1H242.7a1 1 0 0 0 -1 1V953.2a1 1 0 0 0 1 1H246.8" stroke="#666" stroke-width="1.1"/><path d="M244.5 950.6v1.5M246.6 947.2v4.9M248.7 948.6v3.5" stroke="#666" stroke-width="1"/><path d="M248.1 954.9h7.8M252 951.0v7.8" stroke="#555" stroke-width="2"/><path d="M283.2 949.6V945.8a1 1 0 0 0 -1-1H274.8a1 1 0 0 0 -1 1V953.2a1 1 0 0 0 1 1H278.7V944.8M273.8 949.6H283.2" stroke="#666" stroke-width="1.1"/><path d="M280.1 954.9h7.8M284 951.0v7.8" stroke="#555" stroke-width="2"/><path d="M315.2 949.6V944.5L310.5 946.5L305.7 944.5V953.4L310.5 955.4V946.5" stroke="#666" stroke-width="1.1"/><path d="M312.1 954.9h7.8M316 951.0v7.8" stroke="#555" stroke-width="2"/></svg>
</body></html>
